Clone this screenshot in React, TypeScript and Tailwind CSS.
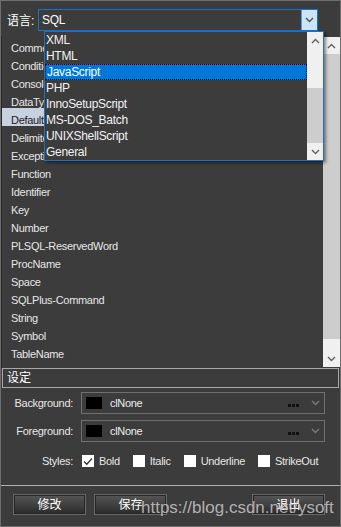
import React from 'react';

const attrs = [
  'Comment', 'Condition', 'Console', 'DataType', 'Default', 'Delimiter', 'Exception',
  'Function', 'Identifier', 'Key', 'Number', 'PLSQL-ReservedWord', 'ProcName', 'Space',
  'SQLPlus-Command', 'String', 'Symbol', 'TableName', 'Variable',
];

const langs = ['XML', 'HTML', 'JavaScript', 'PHP', 'InnoSetupScript', 'MS-DOS_Batch', 'UNIXShellScript', 'General'];

function Chevron({ up = false, color = '#505050' }: { up?: boolean; color?: string }) {
  return (
    <svg width="9" height="6" viewBox="0 0 9 6" fill="none">
      <path d={up ? 'M1 5 L4.5 1.5 L8 5' : 'M1 1 L4.5 4.5 L8 1'} stroke={color} strokeWidth="1.4" />
    </svg>
  );
}

function ColorCombo() {
  return (
    <div className="ml-[8px] w-[244px] h-[22px] border border-[#707070] flex items-center">
      <div className="ml-[4px] w-[16px] h-[12px] bg-black" />
      <span className="ml-[8px] text-[#ececec]">clNone</span>
      <div className="ml-auto mt-[5px] flex gap-[1px]">
        <div className="w-[3px] h-[3px] bg-[#111]" />
        <div className="w-[3px] h-[3px] bg-[#111]" />
        <div className="w-[3px] h-[3px] bg-[#111]" />
      </div>
      <div className="ml-[12px] mr-[4px] flex items-center">
        <Chevron color="#7a7a7a" />
      </div>
    </div>
  );
}

function Check({ label, checked = false }: { label: string; checked?: boolean }) {
  return (
    <div className="flex items-center gap-[5px]">
      <div className="w-[12px] h-[12px] bg-white flex items-center justify-center">
        {checked && (
          <svg width="10" height="9" viewBox="0 0 10 9" fill="none">
            <path d="M1 4.5 L3.8 7.3 L9 1.5" stroke="#333" strokeWidth="1.3" />
          </svg>
        )}
      </div>
      <span>{label}</span>
    </div>
  );
}

function Btn({ label }: { label: string }) {
  return (
    <div className="w-[73px] h-[21px] border border-[#686868] bg-linear-to-b from-[#575757] to-[#2b2b2b] shadow-[inset_0_0_0_1px_#262626] flex items-center justify-center text-[12px] text-white">
      {label}
    </div>
  );
}

export default function App() {
  return (
    <div className="relative w-[341px] h-[527px] bg-[#3c3c3c] border border-[#6e6e6e] overflow-hidden flex flex-col text-[11px] tracking-[-0.3px] text-[#e6e6e6] font-['Liberation_Sans','Noto_Sans_CJK_SC',sans-serif]">
      {/* language row */}
      <div className="h-[35px] flex items-start pt-[8px] shrink-0">
        <span className="w-[37px] pl-[6px] pt-[3px] text-[12px] text-white tracking-normal">语言:</span>
        <div className="w-[280px] h-[22px] border border-[#1e70c1] flex items-center">
          <span className="pl-[3px] text-[12px] text-white">SQL</span>
          <div className="ml-auto w-[16px] h-full bg-[#cce4f7] border-l border-[#569de5] flex items-center justify-center">
            <Chevron />
          </div>
        </div>
      </div>

      {/* attribute list */}
      <div className="h-[332px] shrink-0 flex border-l border-[#262626]">
        <div className="flex-1 overflow-hidden">
          {attrs.map((a) => (
            <div
              key={a}
              className={`h-[18px] pl-[9px] pt-[6px] flex items-center ${a === 'Default' ? 'bg-[#c6d2df] text-[#1c1c1c]' : ''}`}
            >
              {a}
            </div>
          ))}
        </div>
        <div className="w-[17px] my-[1px] bg-[#f0f0f0] flex flex-col">
          <div className="h-[17px] flex items-center justify-center">
            <Chevron up color="#606060" />
          </div>
          <div className="h-[285px] bg-[#cdcdcd]" />
          <div className="flex-1" />
          <div className="h-[17px] flex items-center justify-center">
            <Chevron color="#606060" />
          </div>
        </div>
      </div>

      {/* settings group */}
      <div className="h-[20px] shrink-0 mx-[1px] border border-[#a8a8a8] flex items-center pl-[4px] text-[12px] text-white tracking-normal">
        设定
      </div>
      <div className="flex-1 flex flex-col pt-[4px]">
        <div className="flex items-center">
          <span className="w-[72px] text-right">Background:</span>
          <ColorCombo />
        </div>
        <div className="flex items-center mt-[6px]">
          <span className="w-[72px] text-right">Foreground:</span>
          <ColorCombo />
        </div>
        <div className="flex items-center mt-[11px]">
          <span className="w-[72px] text-right">Styles:</span>
          <div className="ml-[9px] flex items-center gap-[13px]">
            <Check label="Bold" checked />
            <Check label="Italic" />
            <Check label="Underline" />
            <Check label="StrikeOut" />
          </div>
        </div>
      </div>

      {/* buttons */}
      <div className="h-[41px] shrink-0 border-t border-[#b0b0b0] flex items-start pt-[8px] pl-[12px] pr-[15px] gap-[8px] tracking-normal">
        <Btn label="修改" />
        <Btn label="保存" />
        <div className="ml-auto">
          <Btn label="退出" />
        </div>
      </div>

      {/* watermark */}
      <span className="absolute left-[140px] top-[494px] text-[17px] tracking-normal text-[#d0d0d0]/80 font-['Liberation_Sans',sans-serif] pointer-events-none">
        https://blog.csdn.net/ysoft
      </span>

      {/* open dropdown */}
      <div className="absolute left-[43px] top-[30px] w-[280px] h-[130px] border border-[#1e70c1] bg-[#3c3c3c] shadow-[2px_2px_3px_rgba(0,0,0,0.45)] flex">
        <div className="flex-1">
          {langs.map((l) => (
            <div
              key={l}
              className={`h-[16px] pl-[1px] flex items-center text-[12px] ${l === 'JavaScript' ? 'bg-[#0078d7] border border-dotted border-black text-white' : 'text-[#f2f2f2]'}`}
            >
              {l}
            </div>
          ))}
        </div>
        <div className="w-[16px] bg-[#f0f0f0] flex flex-col">
          <div className="h-[17px] flex items-center justify-center">
            <Chevron up color="#606060" />
          </div>
          <div className="h-[39px]" />
          <div className="h-[55px] bg-[#cdcdcd]" />
          <div className="flex-1 flex items-center justify-center">
            <Chevron color="#606060" />
          </div>
        </div>
      </div>
    </div>
  );
}
